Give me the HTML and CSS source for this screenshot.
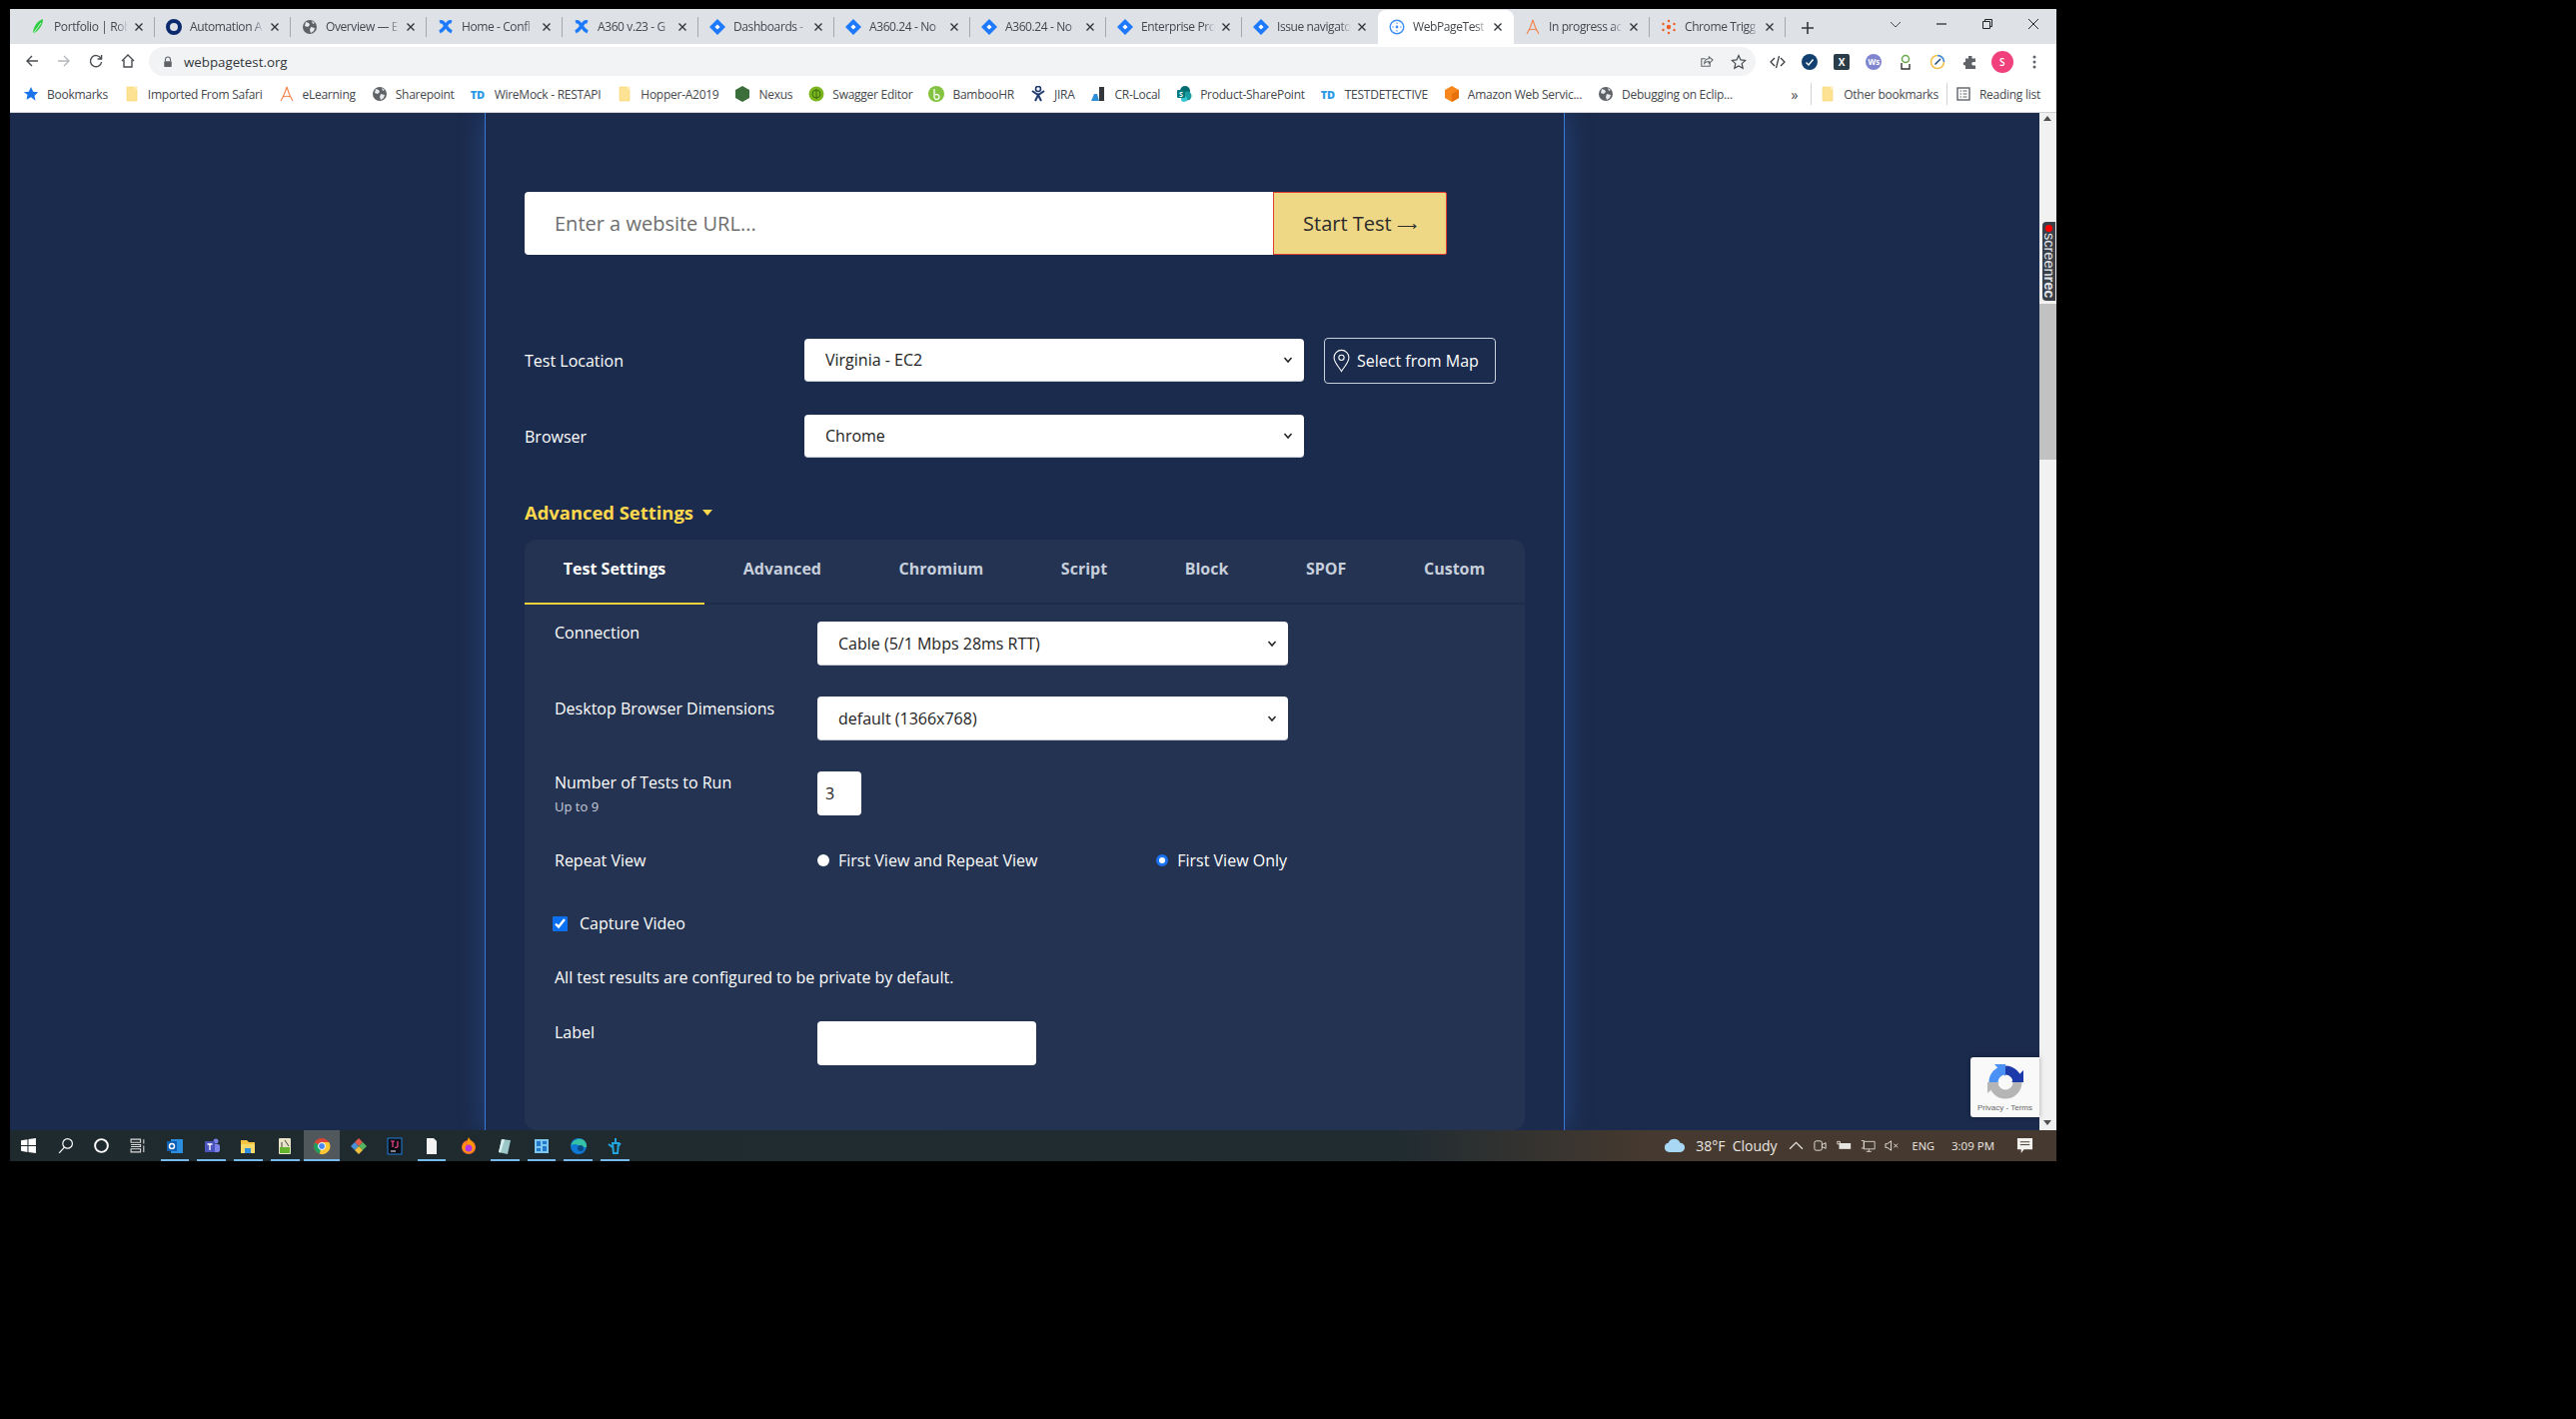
FILE: index.html
```html
<!DOCTYPE html>
<html lang="en">
<head>
  <meta charset="UTF-8" />
  <title>WebPageTest</title>
  <link rel="stylesheet" href="styles.css">
</head>
<body>
  <svg class="defs">
    <symbol id="i-close" viewBox="0 0 16 16"><path d="M4 4l8 8M12 4l-8 8" stroke="#33363b" stroke-width="1.6" fill="none"/></symbol>
    <symbol id="i-globe" viewBox="0 0 16 16"><circle cx="8" cy="8" r="7" fill="#5f6368"/><path d="M4 3l3 1 1 2-2 2-3-1zM9 8l4 1-1 3-3 2-1-3zM10 2l3 2-2 1z" fill="#e8eaed"/></symbol>
    <symbol id="i-conf" viewBox="0 0 16 16"><path d="M2 3c3-1 4 1 6 4s4 5 6 6M14 3c-3-1-4 1-6 4s-4 5-6 6" stroke="#1d7afc" stroke-width="3.4" fill="none"/></symbol>
    <symbol id="i-jira" viewBox="0 0 16 16"><path d="M8 0l8 8-8 8-8-8z" fill="#1d7afc"/><path d="M8 5.4L10.6 8 8 10.6 5.4 8z" fill="#fff"/></symbol>
    <symbol id="i-folder" viewBox="0 0 16 16"><path d="M3 1h7l3 3v11H3z" fill="#fde293"/><path d="M3 1h10v14H3z" fill="none" stroke="#f6d66b" stroke-width=".6"/></symbol>
    <symbol id="i-a" viewBox="0 0 16 16"><path d="M2 15C5 10 7 5 8 1c1 4 3 9 6 14M4 11c3-1 6-1 8 0" stroke="#f0834a" stroke-width="1.1" fill="none"/></symbol>
  </svg>

  <div class="window">
    <div class="tabstrip">
      <div class="tab"><svg class="fav" viewBox="0 0 16 16"><path d="M13 0C7 2 3 8 3 15c5-3 10-8 10-15z" fill="#2ecc40"/><path d="M3 15L11 4" stroke="#fff" stroke-width=".8"/></svg><span class="tab-title">Portfolio | Rob</span><svg class="tab-x"><use href="#i-close"/></svg></div>
      <div class="tab"><svg class="fav" viewBox="0 0 16 16"><circle cx="8" cy="8" r="6" fill="none" stroke="#0c2a6e" stroke-width="4"/></svg><span class="tab-title">Automation A</span><svg class="tab-x"><use href="#i-close"/></svg></div>
      <div class="tab"><svg class="fav"><use href="#i-globe"/></svg><span class="tab-title">Overview — E</span><svg class="tab-x"><use href="#i-close"/></svg></div>
      <div class="tab"><svg class="fav"><use href="#i-conf"/></svg><span class="tab-title">Home - Confl</span><svg class="tab-x"><use href="#i-close"/></svg></div>
      <div class="tab"><svg class="fav"><use href="#i-conf"/></svg><span class="tab-title">A360 v.23 - G</span><svg class="tab-x"><use href="#i-close"/></svg></div>
      <div class="tab"><svg class="fav"><use href="#i-jira"/></svg><span class="tab-title">Dashboards -</span><svg class="tab-x"><use href="#i-close"/></svg></div>
      <div class="tab"><svg class="fav"><use href="#i-jira"/></svg><span class="tab-title">A360.24 - No</span><svg class="tab-x"><use href="#i-close"/></svg></div>
      <div class="tab"><svg class="fav"><use href="#i-jira"/></svg><span class="tab-title">A360.24 - No</span><svg class="tab-x"><use href="#i-close"/></svg></div>
      <div class="tab"><svg class="fav"><use href="#i-jira"/></svg><span class="tab-title">Enterprise Pro</span><svg class="tab-x"><use href="#i-close"/></svg></div>
      <div class="tab tab-before-active"><svg class="fav"><use href="#i-jira"/></svg><span class="tab-title">Issue navigato</span><svg class="tab-x"><use href="#i-close"/></svg></div>
      <div class="tab tab-active"><svg class="fav" viewBox="0 0 16 16"><circle cx="8" cy="8" r="6.8" fill="none" stroke="#3d8ef0" stroke-width="1.4"/><circle cx="8" cy="8" r="1.4" fill="#3d8ef0"/><path d="M8 3.4v1.4M8 11.2v1.4M3.4 8h1.4M11.2 8h1.4" stroke="#3d8ef0" stroke-width="1.2"/></svg><span class="tab-title">WebPageTest</span><svg class="tab-x"><use href="#i-close"/></svg></div>
      <div class="tab"><svg class="fav"><use href="#i-a"/></svg><span class="tab-title">In progress ac</span><svg class="tab-x"><use href="#i-close"/></svg></div>
      <div class="tab"><svg class="fav" viewBox="0 0 16 16"><g fill="#ef5a24"><circle cx="8" cy="8" r="2.2"/><circle cx="8" cy="2" r="1.2"/><circle cx="8" cy="14" r="1.2"/><circle cx="2.5" cy="5" r="1.2"/><circle cx="13.5" cy="5" r="1.2"/><circle cx="2.5" cy="11" r="1.2"/><circle cx="13.5" cy="11" r="1.2"/></g></svg><span class="tab-title">Chrome Trigg</span><svg class="tab-x"><use href="#i-close"/></svg></div>
      <svg class="new-tab" viewBox="0 0 14 14"><path d="M7 1v12M1 7h12" stroke="#33363b" stroke-width="1.6"/></svg>
      <div class="win-controls">
        <svg viewBox="0 0 12 12"><path d="M1 4l5 5 5-5" stroke="#44474c" fill="none"/></svg>
        <svg viewBox="0 0 12 12"><path d="M1 6h10" stroke="#222" stroke-width="1.2"/></svg>
        <svg viewBox="0 0 12 12"><path d="M1.5 3.5h7v7h-7zM3.5 3.500V1.500h7v7h-2" stroke="#222" fill="none"/></svg>
        <svg viewBox="0 0 12 12"><path d="M1 1l10 10M11 1L1 11" stroke="#222"/></svg>
      </div>
    </div>

    <div class="toolbar">
      <div class="nav-btns">
        <svg viewBox="0 0 16 16"><path d="M14 8H3M8 3L3 8l5 5" stroke="#4a4d52" stroke-width="1.4" fill="none"/></svg>
        <svg viewBox="0 0 16 16"><path d="M2 8h11M8 3l5 5-5 5" stroke="#b4b7bb" stroke-width="1.4" fill="none"/></svg>
        <svg viewBox="0 0 16 16"><path d="M13 5.500A5.600 5.600 0 1 0 13.600 9M13.600 2v4h-4" stroke="#4a4d52" stroke-width="1.4" fill="none"/></svg>
        <svg viewBox="0 0 16 16"><path d="M2 8l6-6 6 6M4 7v7h8V7" stroke="#4a4d52" stroke-width="1.4" fill="none"/></svg>
      </div>
      <div class="omnibox">
        <svg class="lock" viewBox="0 0 12 14"><path d="M3 6V4a3 3 0 0 1 6 0v2" stroke="#5f6368" stroke-width="1.300" fill="none"/><rect x="1.500" y="6" width="9" height="7" rx="1" fill="#5f6368"/></svg>
        <span class="omni-url">webpagetest.org</span>
        <svg class="omni-share" viewBox="0 0 16 16"><path d="M12 9v4H3V5h4M6 10c0-4 3-5 5-5V3l4 3.500L11 10V8c-2 0-4 .5-5 2z" stroke="#5f6368" stroke-width="1.100" fill="none"/></svg>
        <svg class="omni-star" viewBox="0 0 16 16"><path d="M8 1.500l2 4.400 4.700.5-3.500 3.200 1 4.700L8 11.900 3.800 14.300l1-4.700L1.300 6.400 6 5.900z" stroke="#45484d" stroke-width="1.200" fill="none"/></svg>
      </div>
      <div class="ext-icons">
        <svg viewBox="0 0 16 16"><path d="M5 4L1 8l4 4M11 4l4 4-4 4M9.500 2l-3 12" stroke="#33363b" stroke-width="1.200" fill="none"/></svg>
        <svg viewBox="0 0 16 16"><circle cx="8" cy="8" r="8" fill="#14406f"/><path d="M4.500 8.500l2.500 2.500 4.500-5.500" stroke="#fff" stroke-width="1.400" fill="none"/></svg>
        <span class="ext-x">X</span>
        <span class="ext-ws">Ws</span>
        <svg viewBox="0 0 16 16"><circle cx="8" cy="5" r="3.500" stroke="#6aa84f" stroke-width="1.500" fill="none"/><path d="M4 9v6h8V10" stroke="#333" stroke-width="1.400" fill="none"/></svg>
        <svg viewBox="0 0 16 16"><circle cx="8" cy="8" r="6.500" stroke="#f2c14e" stroke-width="1.600" fill="none"/><path d="M8 1.500A6.500 6.500 0 0 1 14.500 8" stroke="#3d8ef0" stroke-width="1.600" fill="none"/><path d="M5.500 10.500L11 5" stroke="#14406f" stroke-width="1.500"/></svg>
        <svg viewBox="0 0 16 16"><path d="M6 2h3.500v2.500H13V8h-2a1.800 1.800 0 0 0 0 3.600h2V15H3v-3.500h-.5a1.800 1.800 0 0 1 0-3.600H3V4.500h3z" fill="#5f6368"/></svg>
        <span class="avatar">S</span>
        <svg viewBox="0 0 16 16"><g fill="#5f6368"><circle cx="8" cy="3" r="1.500"/><circle cx="8" cy="8" r="1.500"/><circle cx="8" cy="13" r="1.500"/></g></svg>
      </div>
    </div>

    <div class="bookmarks">
      <a class="bm"><svg viewBox="0 0 16 16"><path d="M8 1l2.200 4.700 5 .6-3.700 3.400 1 5L8 11.200l-4.500 2.500 1-5L.8 6.300l5-.6z" fill="#1a73e8"/></svg>Bookmarks</a>
      <a class="bm"><svg><use href="#i-folder"/></svg>Imported From Safari</a>
      <a class="bm"><svg><use href="#i-a"/></svg>eLearning</a>
      <a class="bm"><svg><use href="#i-globe"/></svg>Sharepoint</a>
      <a class="bm"><b class="td">TD</b>WireMock - RESTAPI</a>
      <a class="bm"><svg><use href="#i-folder"/></svg>Hopper-A2019</a>
      <a class="bm"><svg viewBox="0 0 16 16"><path d="M8 0l7 4v8l-7 4-7-4V4z" fill="#3b6e3b"/></svg>Nexus</a>
      <a class="bm"><svg viewBox="0 0 16 16"><circle cx="8" cy="8" r="7.500" fill="#7ab51d"/><circle cx="8" cy="8" r="4" fill="none" stroke="#3d6b10"/><path d="M8 3v10" stroke="#3d6b10"/></svg>Swagger Editor</a>
      <a class="bm"><svg viewBox="0 0 16 16"><circle cx="8" cy="8" r="8" fill="#83c341"/><path d="M6 3v8a2.500 2.500 0 1 0 1-2" stroke="#fff" stroke-width="1.300" fill="none"/></svg>BambooHR</a>
      <a class="bm"><svg viewBox="0 0 16 16"><circle cx="8" cy="3" r="2.500" fill="none" stroke="#1f3a6e" stroke-width="1.600"/><path d="M2 5l6 4 6-4M5 15l3-6 3 6" stroke="#1f3a6e" stroke-width="2" fill="none"/></svg>JIRA</a>
      <a class="bm"><svg viewBox="0 0 16 16"><path d="M9 1h5v14H9z" fill="#33363b"/><path d="M1 15l3-7h3l2 7z" fill="#2d8ed6"/></svg>CR-Local</a>
      <a class="bm"><svg viewBox="0 0 16 16"><circle cx="9" cy="5" r="5" fill="#036c70"/><circle cx="11" cy="10" r="4.500" fill="#1a9ba1"/><circle cx="8" cy="13" r="3" fill="#37c6d0"/><rect x="1" y="4" width="8" height="8" rx="1" fill="#03787c"/><text x="3" y="10.500" class="sp-s">S</text></svg>Product-SharePoint</a>
      <a class="bm"><b class="td">TD</b>TESTDETECTIVE</a>
      <a class="bm"><svg viewBox="0 0 16 16"><path d="M8 0l7 4v8l-7 4-7-4V4z" fill="#f7861d"/><path d="M8 8l7-4v8l-7 4z" fill="#e8700a"/></svg>Amazon Web Servic...</a>
      <a class="bm"><svg><use href="#i-globe"/></svg>Debugging on Eclip...</a>
      <div class="bm-end">
        <span class="bm-more">»</span>
        <span class="bm-sep"></span>
        <a class="bm"><svg><use href="#i-folder"/></svg>Other bookmarks</a>
        <span class="bm-sep"></span>
        <a class="bm"><svg viewBox="0 0 16 16"><rect x="2" y="2" width="12" height="12" fill="none" stroke="#5f6368" stroke-width="1.400"/><path d="M4.500 5h1.500M4.500 8h1.500M4.500 11h1.500M7.500 5h4M7.500 8h4M7.500 11h4" stroke="#5f6368"/></svg>Reading list</a>
      </div>
    </div>

    <div class="page">
      <div class="content">
        <div class="column">
          <form class="url-form">
            <input class="url-input" type="text" placeholder="Enter a website URL...">
            <button class="start-btn" type="button">Start Test <span class="start-arrow">⟶</span></button>
          </form>

          <div class="row">
            <label class="row-label">Test Location</label>
            <select class="sel"><option>Virginia - EC2</option></select>
            <button class="map-btn" type="button">
              <svg viewBox="0 0 16 22"><path d="M8 1a7 7 0 0 0-7 7c0 5 5 9 7 13 2-4 7-8 7-13a7 7 0 0 0-7-7z" fill="none" stroke="#fff"/><circle cx="8" cy="8" r="2.500" fill="none" stroke="#fff"/></svg>
              Select from Map
            </button>
          </div>
          <div class="row">
            <label class="row-label">Browser</label>
            <select class="sel"><option>Chrome</option></select>
          </div>

          <div class="adv-toggle">Advanced Settings <span class="caret"></span></div>

          <div class="panel">
            <div class="panel-tabs">
              <span class="ptab ptab-active">Test Settings</span>
              <span class="ptab">Advanced</span>
              <span class="ptab">Chromium</span>
              <span class="ptab">Script</span>
              <span class="ptab">Block</span>
              <span class="ptab">SPOF</span>
              <span class="ptab">Custom</span>
            </div>
            <div class="panel-body">
              <div class="frow frow-conn">
                <label class="flabel">Connection</label>
                <select class="sel sel-small"><option>Cable (5/1 Mbps 28ms RTT)</option></select>
              </div>
              <div class="frow frow-dim">
                <label class="flabel">Desktop Browser Dimensions</label>
                <select class="sel sel-small"><option>default (1366x768)</option></select>
              </div>
              <div class="frow frow-num">
                <label class="flabel">Number of Tests to Run<small>Up to 9</small></label>
                <input class="num-input" type="text" value="3">
              </div>
              <div class="frow frow-repeat">
                <label class="flabel">Repeat View</label>
                <div class="radios">
                  <span class="radio-item"><span class="radio"></span>First View and Repeat View</span>
                  <span class="radio-item"><span class="radio radio-on"></span>First View Only</span>
                </div>
              </div>
              <label class="capture"><input type="checkbox" checked>Capture Video</label>
              <p class="private">All test results are configured to be private by default.</p>
              <div class="frow frow-label">
                <label class="flabel">Label</label>
                <input class="label-input" type="text">
              </div>
            </div>
          </div>
        </div>
      </div>

      <div class="scrollbar">
        <span class="sb-up"></span>
        <div class="sb-thumb"></div>
        <span class="sb-down"></span>
      </div>

      <div class="screenrec"><i></i><span>screen<b>rec</b></span></div>

      <div class="recaptcha">
        <svg viewBox="0 0 38 38">
          <path d="M7 19a12 12 0 0 1 12-12" stroke="#4a90f5" stroke-width="9" fill="none"/>
          <path d="M8 1h11v12z" fill="#4a90f5"/>
          <path d="M19 7a12 12 0 0 1 12 12" stroke="#1c3aa9" stroke-width="9" fill="none"/>
          <path d="M37 7v12H25z" fill="#1c3aa9"/>
          <path d="M31 19a12 12 0 0 1-24 0" stroke="#b5b5b5" stroke-width="9" fill="none"/>
          <path d="M1 19h12L1 30z" fill="#b5b5b5"/>
        </svg>
        <span>Privacy - Terms</span>
      </div>
    </div>

    <div class="taskbar">
      <div class="task-left">
        <span class="task-sys"><svg viewBox="0 0 16 16"><path d="M1 3l6-1v5.500H1zM8 1.800L15 1v6.500H8zM1 8.500h6V14l-6-1zM8 8.500h7V15l-7-1z" fill="#fff"/></svg></span>
        <span class="task-sys"><svg viewBox="0 0 16 16"><circle cx="10" cy="6" r="4.500" fill="none" stroke="#fff" stroke-width="1.100"/><path d="M7 9.500L2 15" stroke="#fff" stroke-width="1.100"/></svg></span>
        <span class="task-sys"><svg viewBox="0 0 16 16"><circle cx="8" cy="8" r="6" fill="none" stroke="#fff" stroke-width="1.800"/></svg></span>
        <span class="task-sys"><svg viewBox="0 0 16 16"><path d="M1 2h9v3H1zM1 11h9v3H1zM1 7h9v2H1M13 2v4M13 8v6" fill="none" stroke="#ddd"/></svg></span>
        <span class="task-app on"><svg viewBox="0 0 18 18"><rect x="5" y="2" width="12" height="14" fill="#2c8ee0"/><rect x="1" y="4" width="10" height="10" fill="#0f5fb3"/><circle cx="6" cy="9" r="2.500" fill="none" stroke="#fff" stroke-width="1.400"/></svg></span>
        <span class="task-app on"><svg viewBox="0 0 18 18"><circle cx="13" cy="4" r="2.500" fill="#7b83eb"/><rect x="10" y="7" width="7" height="8" rx="2" fill="#7b83eb"/><rect x="2" y="4" width="10" height="11" fill="#4b53bc"/><path d="M4.500 7h5M7 7v6" stroke="#fff" stroke-width="1.300"/></svg></span>
        <span class="task-app on"><svg viewBox="0 0 18 18"><path d="M2 3h6l2 2h6v11H2z" fill="#f6c342"/><rect x="2" y="7" width="14" height="9" fill="#fbd96a"/><rect x="6" y="11" width="6" height="5" fill="#2c8ee0"/></svg></span>
        <span class="task-app on"><svg viewBox="0 0 18 18"><rect x="3" y="1" width="12" height="16" rx="1" fill="#e9e4c8"/><rect x="4" y="10" width="10" height="6" fill="#65b32e"/><path d="M6 5v5M9 3l4 6" stroke="#444"/></svg></span>
        <span class="task-app on active"><svg viewBox="0 0 18 18"><circle cx="9" cy="9" r="8" fill="#dc4437"/><path d="M9 9L2 5.500A8 8 0 0 0 7 16.800z" fill="#18a05c"/><path d="M9 5h7.200A8 8 0 0 1 7 16.800z" fill="#fcc934"/><circle cx="9" cy="9" r="3.500" fill="#4787f3" stroke="#fff"/></svg></span>
        <span class="task-app"><svg viewBox="0 0 18 18"><path d="M9 1l4 4-4 4-4-4z" fill="#e2574c"/><path d="M13 5l4 4-4 4-4-4z" fill="#57b560"/><path d="M5 5l4 4-4 4-4-4z" fill="#4a90d9"/><path d="M9 9l4 4-4 4-4-4z" fill="#f0c13c"/></svg></span>
        <span class="task-app"><svg viewBox="0 0 18 18"><rect x="2" y="1" width="14" height="16" fill="#0c0c14" stroke="#1f7fd6"/><path d="M5 4h4M7 4v6M12 4v5a2 2 0 0 1-3 1" stroke="#f74a8b" stroke-width="1.200" fill="none"/><path d="M5 14h5" stroke="#fff"/></svg></span>
        <span class="task-app on"><svg viewBox="0 0 18 18"><path d="M4 1h7l3 3v13H4z" fill="#f3f3f3"/></svg></span>
        <span class="task-app"><svg viewBox="0 0 18 18"><circle cx="9" cy="10" r="7" fill="#ff7139"/><path d="M9 0c1 3 6 5 6 10a6 6 0 0 1-12 0c0-2 1-4 2-5 0 2 1 3 2 3 0-3 1-6 2-8z" fill="#ff9500"/><circle cx="9" cy="11" r="3.500" fill="#b833e1"/></svg></span>
        <span class="task-app on"><svg viewBox="0 0 18 18"><path d="M6 2l9 1-3 14-9-2z" fill="#9cc7c9"/><path d="M6 2l3 .3-4 13.300-2-.6z" fill="#d9eeee"/></svg></span>
        <span class="task-app on"><svg viewBox="0 0 18 18"><rect x="2" y="2" width="14" height="14" fill="#7ec5f0"/><path d="M4 4h4v5H4zM10 4h4v3h-4zM10 9h4v5h-4zM4 11h4v3H4z" fill="#1f78c8"/></svg></span>
        <span class="task-app on"><svg viewBox="0 0 18 18"><circle cx="9" cy="9" r="8" fill="#0f78d4"/><path d="M1.500 8C3 3 8 1 12 2c4 1 5.500 5 5 8h-7c-1-3-4-4-8.500-2z" fill="#35c1a5"/><circle cx="11" cy="11" r="3" fill="#0a4a86"/></svg></span>
        <span class="task-app on"><svg viewBox="0 0 18 18"><path d="M10 1v4M7 6h6l-1 10H8zM3 7l4 3M15 6l-3 4" stroke="#22a4dc" stroke-width="2" fill="none"/></svg></span>
      </div>
      <div class="task-right">
        <svg class="cloud" viewBox="0 0 24 16"><path d="M6 15a5 5 0 0 1-1-9.900A7 7 0 0 1 18 5a5 5 0 0 1 0 10z" fill="#a9d8f5"/></svg>
        <span class="weather">38°F&nbsp; Cloudy</span>
        <svg class="tray tray-chev" viewBox="0 0 14 14"><path d="M1 10l6-6 6 6" stroke="#e8e4df" stroke-width="1.100" fill="none"/></svg>
        <svg class="tray" viewBox="0 0 16 16"><rect x="2" y="3" width="8" height="10" rx="2" fill="none" stroke="#e8e4df"/><path d="M10 7l4-2v6l-4-2" fill="none" stroke="#e8e4df"/></svg>
        <svg class="tray" viewBox="0 0 18 16"><rect x="3" y="5" width="14" height="7" fill="#e8e4df"/><rect x="1" y="3" width="3" height="3" fill="none" stroke="#e8e4df"/></svg>
        <svg class="tray" viewBox="0 0 18 16"><path d="M4 3h13v9H4zM10 12v3M7 15h6M1 2h3v9H1" fill="none" stroke="#e8e4df"/></svg>
        <svg class="tray" viewBox="0 0 16 16"><path d="M1 6h2l4-3v10l-4-3H1zM10 6l4 4M14 6l-4 4" fill="none" stroke="#e8e4df"/></svg>
        <span class="tray-lang">ENG</span>
        <span class="tray-time">3:09 PM</span>
        <svg class="tray-note" viewBox="0 0 18 18"><path d="M1 1h16v12H8l-3 4v-4H1z" fill="#f4f2ef"/><path d="M4 5h10M4 8h10" stroke="#46382e"/></svg>
      </div>
    </div>
  </div>
</body>
</html>
```

FILE: styles.css
```css
* {
  box-sizing: border-box;
}
html, body {
  margin: 0;
  height: 100%;
  background: #000;
  overflow: hidden;
}
body {
  padding: 9px 0 0 10px;
  font-family: "Open Sans", sans-serif;
}
.defs {
  display: none;
}

.window {
  width: 2048px;
  height: 1153px;
  display: flex;
  flex-direction: column;
}

/* browser tabs */
.tabstrip {
  height: 35px;
  background: #dee1e6;
  display: flex;
  padding-left: 9px;
  position: relative;
}
.tab {
  width: 136px;
  height: 35px;
  padding-left: 11px;
  display: flex;
  align-items: center;
  gap: 8px;
  position: relative;
}
.tab::after {
  content: "";
  position: absolute;
  right: 0;
  top: 8px;
  height: 20px;
  width: 1px;
  background: #a6a9ad;
}
.tab-before-active::after, .tab-active::after {
  display: none;
}
.tab-active {
  background: #fff;
  border-radius: 8px 8px 0 0;
  margin-top: 1px;
  height: 34px;
  padding-bottom: 1px;
}
.fav {
  width: 16px;
  height: 16px;
  flex: none;
}
.tab-title {
  width: 74px;
  overflow: hidden;
  white-space: nowrap;
  font-size: 12px;
  letter-spacing: -0.4px;
  color: #45484d;
  -webkit-mask-image: linear-gradient(to right, #000 85%, transparent);
  mask-image: linear-gradient(to right, #000 85%, transparent);
}
.tab-x {
  width: 14px;
  height: 14px;
  flex: none;
  margin-left: -4px;
}
.new-tab {
  width: 14px;
  height: 14px;
  margin: 12px 0 0 15px;
}
.win-controls {
  margin-left: auto;
  width: 167px;
  display: flex;
  align-items: center;
  justify-content: space-between;
  padding: 0 17px 5px 0;
}
.win-controls svg {
  width: 12px;
  height: 12px;
}

/* address bar */
.toolbar {
  height: 32px;
  background: #fff;
  display: flex;
  align-items: flex-start;
  padding: 3px 0 0 14px;
}
.nav-btns {
  width: 125px;
  display: flex;
  gap: 16px;
  padding-top: 6px;
}
.nav-btns svg {
  width: 16px;
  height: 16px;
}
.omnibox {
  width: 1608px;
  height: 29px;
  background: #f1f3f4;
  border-radius: 15px;
  display: flex;
  align-items: center;
  padding-left: 14px;
}
.lock {
  width: 10px;
  height: 12px;
}
.omni-url {
  margin-left: 11px;
  font-size: 13.300px;
  color: #33363b;
}
.omni-share {
  width: 15px;
  height: 15px;
  margin-left: auto;
}
.omni-star {
  width: 16px;
  height: 16px;
  margin: 0 9px 0 17px;
}
.ext-icons {
  display: flex;
  align-items: center;
  width: 290px;
  height: 29px;
  padding-left: 14px;
  gap: 16.100px;
}
.ext-icons > * {
  width: 16px;
  height: 16px;
  flex: none;
}
.ext-x {
  background: #2a3c47;
  color: #fff;
  font-size: 10px;
  font-weight: 700;
  border-radius: 2px;
  text-align: center;
  line-height: 16px;
}
.ext-ws {
  background: #7f86cf;
  color: #fff;
  border-radius: 50%;
  font-size: 8px;
  font-weight: 700;
  text-align: center;
  line-height: 16px;
}
.ext-icons .avatar {
  width: 22px;
  height: 22px;
  margin: 0 -3px;
  background: #f0417d;
  color: #fff;
  border-radius: 50%;
  font-size: 10px;
  font-weight: 600;
  text-align: center;
  line-height: 22px;
}

/* bookmarks bar */
.bookmarks {
  height: 37px;
  background: #fff;
  border-bottom: 1px solid #cfd1d4;
  display: flex;
  align-items: center;
  padding-left: 13px;
  gap: 16px;
  font-size: 12px;
  color: #45484d;
  letter-spacing: -0.26px;
  white-space: nowrap;
}
.bm {
  display: flex;
  align-items: center;
  gap: 8px;
}
.bm svg {
  width: 16px;
  height: 16px;
  flex: none;
}
.td {
  color: #2c9be6;
  width: 16px;
  font-size: 11px;
  font-weight: 800;
}
.sp-s {
  font-size: 7px;
  fill: #fff;
  font-weight: 700;
}
.bm-end {
  display: flex;
  align-items: center;
  gap: 8px;
  margin-left: auto;
  padding-right: 16px;
}
.bm-more {
  font-size: 14px;
  margin-right: 5px;
}
.bm-sep {
  width: 1px;
  height: 22px;
  background: #cfd1d4;
}

/* the site */
.page {
  flex: 1;
  display: flex;
  position: relative;
  overflow: hidden;
  background: #1b2b4d;
}
.content {
  flex: 1;
  padding-left: 475px;
}
.column {
  width: 1081px;
  height: 100%;
  padding: 79px 0 0 39px;
  border-left: 1px solid #3b78d8;
  border-right: 1px solid #3b78d8;
  background: #1b2b4d;
  box-shadow: 0 0 24px rgba(50, 110, 200, 0.4);
  color: #fff;
}
.url-form {
  display: flex;
  width: 923px;
  height: 63px;
  margin-bottom: 84px;
}
.url-input {
  flex: 1;
  border: 0;
  border-radius: 4px 0 0 4px;
  padding: 0 30px;
  font: 20px "Open Sans", sans-serif;
}
.url-input::placeholder {
  color: #6e6e6e;
}
.start-btn {
  width: 174px;
  background: #eed885;
  border: 1px solid #e0402f;
  border-radius: 0 2px 2px 0;
  font: 20px "Open Sans", sans-serif;
  color: #2b2b2b;
}
.start-arrow {
  font-size: 14px;
}
.row {
  display: flex;
  align-items: center;
  height: 43px;
  margin-bottom: 33px;
}
.row-label {
  width: 280px;
  font-size: 16px;
}
.sel {
  width: 500px;
  height: 43px;
  -webkit-appearance: none;
  appearance: none;
  border: 0;
  border-bottom: 1px solid #c6cad3;
  border-radius: 4px;
  padding: 0 21px;
  font: 16px "Open Sans", sans-serif;
  color: #222;
  background: #fff url("data:image/svg+xml,%3Csvg xmlns='http://www.w3.org/2000/svg' viewBox='0 0 10 10'%3E%3Cpath d='M1.500 3l3.500 4 3.500-4' stroke='%23222' stroke-width='1.500' fill='none'/%3E%3C/svg%3E") no-repeat right 11px center / 10px 10px;
}
.map-btn {
  width: 172px;
  height: 46px;
  margin-left: 20px;
  border: 1px solid #c9d0dc;
  border-radius: 4px;
  background: transparent;
  color: #fff;
  font: 16px "Open Sans", sans-serif;
  display: flex;
  align-items: center;
  gap: 7px;
  padding: 0 0 0 8px;
}
.map-btn svg {
  width: 17px;
  height: 24px;
}
.adv-toggle {
  font-size: 18.400px;
  font-weight: 700;
  color: #ffd84d;
  line-height: 24px;
  margin: 43px 0 15px;
  display: flex;
  align-items: center;
  gap: 9px;
}
.caret {
  border: 5.500px solid transparent;
  border-top: 6px solid #ffd84d;
  border-bottom: 0;
}
.panel {
  width: 1001px;
  height: 591px;
  background: #243351;
  border-radius: 12px;
}
.panel-tabs {
  display: flex;
  height: 65px;
  border-bottom: 2px solid #1f2d4b;
}
.ptab {
  font-size: 16px;
  font-weight: 700;
  color: #c7cfdc;
  padding: 18px 38.800px 0;
  height: 65px;
}
.ptab-active {
  color: #fff;
  border-bottom: 2px solid #f5d33d;
}
.panel-body {
  padding: 17px 0 0 30px;
  font-size: 16px;
}
.frow {
  display: flex;
  align-items: flex-start;
}
.flabel {
  width: 263px;
  display: block;
  line-height: 22px;
  flex: none;
}
.flabel small {
  display: block;
  font-size: 13px;
  line-height: 18px;
  color: #c7cfdc;
  margin-top: 4px;
}
.sel-small {
  width: 471px;
  height: 44px;
}
.frow-conn {
  margin-bottom: 31px;
}
.frow-dim .flabel {
  margin-top: 1px;
}
.frow-dim {
  margin-bottom: 31px;
}
.num-input {
  width: 44px;
  height: 44px;
  border: 0;
  border-radius: 4px;
  padding: 0 8px;
  font: 16px "Open Sans", sans-serif;
  color: #222;
}
.frow-repeat {
  margin-top: 34px;
  line-height: 22px;
}
.frow-repeat .radios {
  width: 470px;
  display: flex;
  justify-content: space-between;
}
.radio-item {
  display: flex;
  align-items: center;
  gap: 9px;
}
.radio {
  width: 12px;
  height: 12px;
  border-radius: 50%;
  background: #fff;
}
.radio-on {
  border: 3px solid #1a73f0;
}
.capture {
  display: flex;
  align-items: center;
  gap: 12px;
  margin: 41px 0 0 -2px;
  line-height: 22px;
}
.capture input {
  width: 15px;
  height: 15px;
  margin: 0;
  accent-color: #0b6ff2;
}
.private {
  margin: 32px 0 0;
  line-height: 22px;
}
.frow-label {
  margin-top: 33px;
}
.label-input {
  width: 219px;
  height: 44px;
  border: 0;
  border-radius: 4px;
}

/* scrollbar and things sitting over the page */
.scrollbar {
  width: 17px;
  background: #f1f1f1;
  position: relative;
}
.sb-thumb {
  position: absolute;
  top: 191px;
  left: 0;
  width: 17px;
  height: 156px;
  background: #c1c1c1;
}
.sb-up, .sb-down {
  position: absolute;
  left: 4px;
  border: 4.500px solid transparent;
}
.sb-up {
  top: 3px;
  border-bottom: 5px solid #505050;
  border-top: 0;
}
.sb-down {
  bottom: 5px;
  border-top: 5px solid #505050;
  border-bottom: 0;
}
.screenrec {
  position: absolute;
  top: 109px;
  right: 1px;
  width: 13px;
  height: 79px;
  background: #3a3f48;
  border-radius: 4px 0 0 4px;
  color: #e3e5e8;
  font: 14.500px "Liberation Sans", sans-serif;
}
.screenrec i {
  position: absolute;
  top: 3px;
  left: 3px;
  width: 7px;
  height: 7px;
  border-radius: 50%;
  background: #f00;
}
.screenrec span {
  position: absolute;
  top: 11px;
  left: 0;
  writing-mode: vertical-rl;
  line-height: 13px;
}
.recaptcha {
  position: absolute;
  top: 945px;
  right: 17px;
  width: 69px;
  height: 60px;
  background: #f9f9f9;
  border-radius: 3px 0 0 3px;
  box-shadow: 0 0 5px rgba(0, 0, 0, 0.3);
  display: flex;
  flex-direction: column;
  align-items: center;
  color: #666;
  font: 8px "Liberation Sans", sans-serif;
}
.recaptcha svg {
  width: 38px;
  height: 38px;
  margin: 6px 0 2px;
}

/* windows taskbar */
.taskbar {
  height: 31px;
  background: linear-gradient(to right, #1f2a2f 0, #212c31 68%, #46392f 80%, #46392f 100%);
  display: flex;
  justify-content: space-between;
  align-items: center;
  color: #ece8e3;
}
.task-left {
  display: flex;
  height: 100%;
}
.task-sys, .task-app {
  width: 36.700px;
  height: 31px;
  display: flex;
  align-items: center;
  justify-content: center;
  flex: none;
  position: relative;
}
.task-sys svg {
  width: 17px;
  height: 17px;
}
.task-app svg {
  width: 18px;
  height: 18px;
}
.task-app.on::after {
  content: "";
  position: absolute;
  left: 4px;
  right: 4px;
  bottom: 0;
  height: 2px;
  background: #76b9ed;
}
.task-app.active {
  background: rgba(255, 255, 255, 0.22);
}
.task-app.active::after {
  left: 0;
  right: 0;
}
.task-right {
  display: flex;
  align-items: center;
  height: 100%;
  font-size: 12px;
  padding-right: 23px;
}
.cloud {
  width: 22px;
  height: 15px;
}
.weather {
  margin-left: 10px;
  font-size: 14px;
}
.tray {
  width: 15px;
  height: 15px;
  margin-left: 9px;
}
.tray-chev {
  margin-left: 11px;
}
.tray-lang {
  margin-left: 13px;
  font-size: 11px;
}
.tray-time {
  margin-left: 17px;
  font-size: 11.500px;
}
.tray-note {
  width: 17px;
  height: 17px;
  margin-left: 22px;
}
```
